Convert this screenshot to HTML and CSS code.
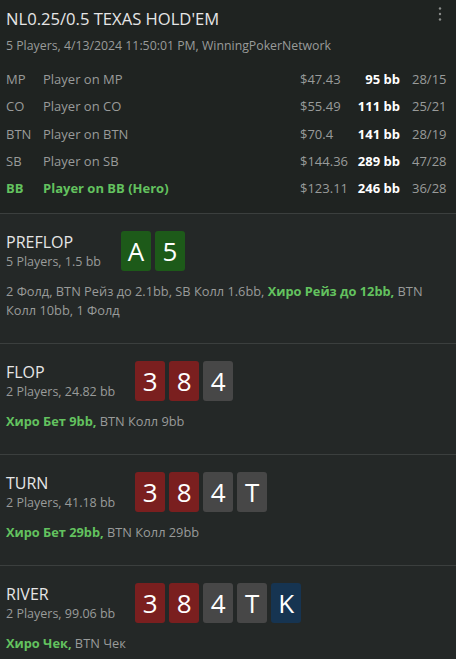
FILE: index.html
```html
<!DOCTYPE html>
<html lang="en">
<head>
  <meta charset="UTF-8">
  <title>Hand – NL0.25/0.5 Texas Hold'em</title>
  <link rel="stylesheet" href="styles.css">
</head>
<body>
  <div class="hand">
    <div class="hand-header">
      <div class="title-row">
        <h1>NL0.25/0.5 TEXAS HOLD'EM</h1>
        <svg class="menu" width="4" height="16" viewBox="0 0 4 16">
          <circle cx="2" cy="2.5" r="1.2" />
          <circle cx="2" cy="8" r="1.2" />
          <circle cx="2" cy="13.5" r="1.2" />
        </svg>
      </div>
      <div class="subtitle">5 Players, 4/13/2024 11:50:01 PM, WinningPokerNetwork</div>

      <div class="players">
        <div class="player">
          <span class="pos">MP</span><span class="name">Player on MP</span>
          <span class="money">$47.43</span><span class="bb">95 bb</span><span class="stats">28/15</span>
        </div>
        <div class="player">
          <span class="pos">CO</span><span class="name">Player on CO</span>
          <span class="money">$55.49</span><span class="bb">111 bb</span><span class="stats">25/21</span>
        </div>
        <div class="player">
          <span class="pos">BTN</span><span class="name">Player on BTN</span>
          <span class="money">$70.4</span><span class="bb">141 bb</span><span class="stats">28/19</span>
        </div>
        <div class="player">
          <span class="pos">SB</span><span class="name">Player on SB</span>
          <span class="money">$144.36</span><span class="bb">289 bb</span><span class="stats">47/28</span>
        </div>
        <div class="player hero">
          <span class="pos">BB</span><span class="name">Player on BB (Hero)</span>
          <span class="money">$123.11</span><span class="bb">246 bb</span><span class="stats">36/28</span>
        </div>
      </div>
    </div>

    <div class="street">
      <div class="street-head">
        <div class="street-info">
          <div class="street-name">PREFLOP</div>
          <div class="street-sub">5 Players, 1.5 bb</div>
        </div>
        <div class="cards">
          <span class="card green">A</span>
          <span class="card green">5</span>
        </div>
      </div>
      <p class="actions">2 Фолд, BTN Рейз до 2.1bb, SB Колл 1.6bb, <b>Хиро Рейз до 12bb,</b> BTN Колл 10bb, 1 Фолд</p>
    </div>

    <div class="street">
      <div class="street-head">
        <div class="street-info">
          <div class="street-name">FLOP</div>
          <div class="street-sub">2 Players, 24.82 bb</div>
        </div>
        <div class="cards">
          <span class="card red">3</span>
          <span class="card red">8</span>
          <span class="card grey">4</span>
        </div>
      </div>
      <p class="actions"><b>Хиро Бет 9bb,</b> BTN Колл 9bb</p>
    </div>

    <div class="street">
      <div class="street-head">
        <div class="street-info">
          <div class="street-name">TURN</div>
          <div class="street-sub">2 Players, 41.18 bb</div>
        </div>
        <div class="cards">
          <span class="card red">3</span>
          <span class="card red">8</span>
          <span class="card grey">4</span>
          <span class="card grey">T</span>
        </div>
      </div>
      <p class="actions"><b>Хиро Бет 29bb,</b> BTN Колл 29bb</p>
    </div>

    <div class="street">
      <div class="street-head">
        <div class="street-info">
          <div class="street-name">RIVER</div>
          <div class="street-sub">2 Players, 99.06 bb</div>
        </div>
        <div class="cards">
          <span class="card red">3</span>
          <span class="card red">8</span>
          <span class="card grey">4</span>
          <span class="card grey">T</span>
          <span class="card blue">K</span>
        </div>
      </div>
      <p class="actions"><b>Хиро Чек,</b> BTN Чек</p>
    </div>
  </div>
</body>
</html>
```

FILE: styles.css
```css
:root {
  --bg-top: #1f2321;
  --bg: #242827;
  --line: #3b3f3e;
  --text: #e6e6e6;
  --muted: #999b9a;
  --hero: #63c25f;
}

body {
  margin: 0;
  background-color: var(--bg);
  color: var(--text);
  font-family: "Open Sans", sans-serif;
}

.hand-header {
  background-color: var(--bg-top);
  padding: 7px 8px 11px 6px;
  border-bottom: 1px solid var(--line);
}

.title-row {
  display: flex;
  justify-content: space-between;
  align-items: flex-start;
}

h1 {
  margin: 0;
  font-size: 16.6px;
  font-weight: normal;
  line-height: 24px;
}

.menu {
  fill: #8a8c8b;
  margin-top: -1px;
  margin-right: 6px;
}

.subtitle {
  margin-top: 6px;
  font-size: 12.3px;
  color: var(--muted);
}

.players {
  margin-top: 12px;
}

.player {
  display: flex;
  font-size: 13px;
  line-height: 27.3px;
  color: var(--muted);
}

.pos {
  width: 37px;
}

.name {
  flex: 1;
}

.money {
  width: 57px;
}

.bb {
  width: 43px;
  text-align: right;
  color: #fff;
  font-weight: bold;
}

.stats {
  width: 36px;
  padding-left: 12px;
}

.player.hero .pos,
.player.hero .name {
  color: var(--hero);
  font-weight: bold;
}

.street {
  padding: 17px 8px 23px 6px;
  border-bottom: 1px solid var(--line);
}

.street:last-child {
  border-bottom: none;
}

.street-head {
  display: flex;
  align-items: center;
  gap: 20px;
}

.street-name {
  font-size: 16px;
  line-height: 22px;
}

.street-sub {
  font-size: 12.5px;
  color: var(--muted);
  line-height: 18px;
}

.cards {
  display: flex;
  gap: 4px;
}

.card {
  width: 30px;
  height: 40px;
  border-radius: 3px;
  display: flex;
  align-items: center;
  justify-content: center;
  font-size: 26px;
  color: #fff;
}

.card.green { background-color: #1d5a19; }
.card.red { background-color: #7a1f1f; }
.card.grey { background-color: #474747; }
.card.blue { background-color: #163451; }

.actions {
  margin: 11px 0 0;
  font-size: 12.8px;
  line-height: 19px;
  color: var(--muted);
}

.actions b {
  color: var(--hero);
}
```
